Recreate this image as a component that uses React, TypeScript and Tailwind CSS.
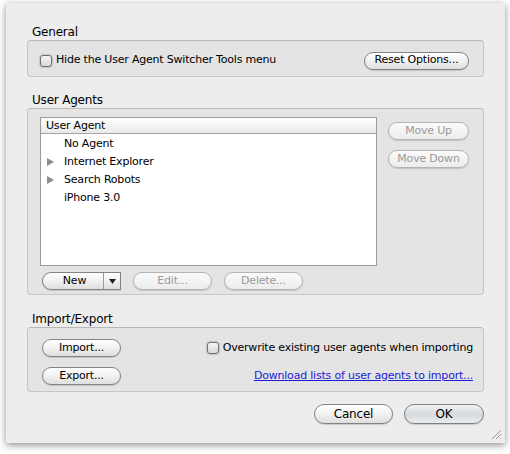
import React from 'react';

const FONT = { fontFamily: '"DejaVu Sans", "Liberation Sans", sans-serif' };

function Btn({
  children,
  w,
  disabled = false,
  big = false,
  def = false,
}: {
  children: React.ReactNode;
  w: string;
  disabled?: boolean;
  big?: boolean;
  def?: boolean;
}) {
  const tone = disabled
    ? 'border-[#b4b4b4] text-[#9a9a9a] bg-gradient-to-b from-[#fbfbfb] to-[#ececec]'
    : def
      ? 'border-[#7e7e7e] text-black bg-gradient-to-b from-[#f2f4f5] via-[#d6dadd] to-[#e9ecee]'
      : 'border-[#838383] text-black bg-gradient-to-b from-white via-[#f1f1f1] to-[#dedede]';
  return (
    <div
      className={`${w} ${big ? 'h-[20px] text-[12px]' : 'h-[18px] text-[11px]'} ${tone} flex items-center justify-center rounded-full border shadow-[0_1px_1px_rgba(0,0,0,0.15)]`}
    >
      {children}
    </div>
  );
}

function Checkbox() {
  return (
    <div className="w-[12px] h-[12px] rounded-[3px] border border-[#6f6f6f] bg-gradient-to-b from-[#f4f4f4] to-[#d8d8d8] shadow-[0_0_2px_rgba(0,0,0,0.45)] shrink-0" />
  );
}

function Arrow() {
  return (
    <svg width="7" height="8" viewBox="0 0 7 8" className="shrink-0">
      <path d="M0 0 L7 4 L0 8 Z" fill="#8d8d8d" />
    </svg>
  );
}

const AGENTS: { name: string; group: boolean }[] = [
  { name: 'No Agent', group: false },
  { name: 'Internet Explorer', group: true },
  { name: 'Search Robots', group: true },
  { name: 'iPhone 3.0', group: false },
];

function Box({ children, className = '' }: { children: React.ReactNode; className?: string }) {
  return (
    <div className={`rounded-[4px] border border-[#c6c6c6] border-t-[#b8b8b8] bg-[#e4e4e4] ${className}`}>
      {children}
    </div>
  );
}

function Title({ children }: { children: React.ReactNode }) {
  return <div className="h-[16px] pl-[5px] text-[12px] leading-[16px] text-black">{children}</div>;
}

export default function App() {
  return (
    <div className="w-[510px] h-[454px] bg-white overflow-hidden tracking-[-0.2px]" style={FONT}>
      <div className="ml-[6px] mt-[3px] w-[499px] h-[440px] bg-[#ededed] shadow-[0_2px_7px_rgba(0,0,0,0.45)] flex flex-col px-[21px] pt-[21px] relative">
        <Title>General</Title>
        <Box className="h-[37px] flex items-center pl-[12px] pr-[14px] pt-[4px]">
          <Checkbox />
          <span className="ml-[4px] text-[11px]">Hide the User Agent Switcher Tools menu</span>
          <div className="ml-auto">
            <Btn w="w-[105px]">Reset Options...</Btn>
          </div>
        </Box>

        <div className="h-[15px]" />
        <Title>User Agents</Title>
        <Box className="h-[187px] flex flex-col pl-[12px] pr-[14px] pt-[8px]">
          <div className="flex">
            <div className="w-[337px] h-[149px] bg-white border border-[#9b9b9b] flex flex-col">
              <div className="h-[16px] border-b border-[#a6a6a6] bg-gradient-to-b from-white to-[#e9e9e9] text-[11px] leading-[15px] pl-[5px]">
                User Agent
              </div>
              <div className="pt-[1px]">
                {AGENTS.map((a) => (
                  <div key={a.name} className="h-[18px] flex items-center text-[11px] pl-[6px]">
                    <div className="w-[17px] flex items-center">{a.group && <Arrow />}</div>
                    <span>{a.name}</span>
                  </div>
                ))}
              </div>
            </div>
            <div className="ml-[11px] flex flex-col gap-[10px] pt-[5px]">
              <Btn w="w-[81px]" disabled>
                Move Up
              </Btn>
              <Btn w="w-[81px]" disabled>
                Move Down
              </Btn>
            </div>
          </div>
          <div className="flex mt-[6px] gap-[12px] pl-[2px]">
            <div className="w-[79px] h-[18px] flex border border-[#838383] rounded-l-full rounded-r-[4px] bg-gradient-to-b from-white via-[#f1f1f1] to-[#dedede] shadow-[0_1px_1px_rgba(0,0,0,0.15)] text-[11px]">
              <div className="flex-1 flex items-center justify-center pl-[3px]">New</div>
              <div className="w-[17px] border-l border-[#9a9a9a] flex items-center justify-center">
                <svg width="7" height="5" viewBox="0 0 7 5">
                  <path d="M0 0 L7 0 L3.5 5 Z" fill="#222" />
                </svg>
              </div>
            </div>
            <Btn w="w-[79px]" disabled>
              Edit...
            </Btn>
            <Btn w="w-[79px]" disabled>
              Delete...
            </Btn>
          </div>
        </Box>

        <div className="h-[16px]" />
        <Title>Import/Export</Title>
        <Box className="h-[65px] flex pl-[14px] pr-[10px] pt-[11px]">
          <div className="flex flex-col gap-[10px]">
            <Btn w="w-[79px]">Import...</Btn>
            <Btn w="w-[79px]">Export...</Btn>
          </div>
          <div className="ml-auto flex flex-col items-end text-[11px]">
            <div className="flex items-center h-[18px]">
              <Checkbox />
              <span className="ml-[4px]">Overwrite existing user agents when importing</span>
            </div>
            <div className="h-[18px] mt-[10px] flex items-center text-[#1c1cd6] underline">
              Download lists of user agents to import...
            </div>
          </div>
        </Box>

        <div className="flex justify-end gap-[11px] mt-[12px]">
          <Btn w="w-[79px]" big>
            Cancel
          </Btn>
          <Btn w="w-[80px]" big def>
            OK
          </Btn>
        </div>

        <svg width="12" height="12" viewBox="0 0 12 12" className="absolute right-[3px] bottom-[3px]">
          <path d="M11 2 L2 11 M11 6 L6 11 M11 10 L10 11" stroke="#9a9a9a" strokeWidth="1" />
        </svg>
      </div>
    </div>
  );
}
